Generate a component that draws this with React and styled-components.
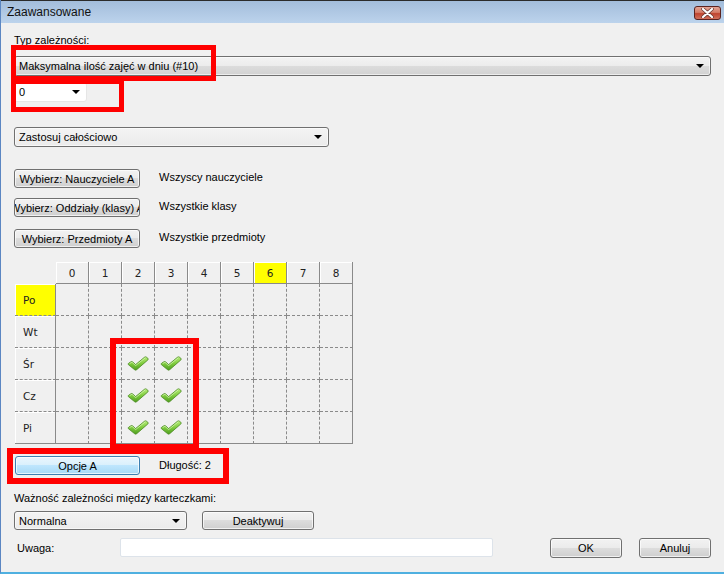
import React from "react";
import styled, { createGlobalStyle, css } from "styled-components";

const Global = createGlobalStyle`
  html, body { margin: 0; padding: 0; background: #f0f0f0; }
  body { font-family: "Liberation Sans", Arial, sans-serif; font-size: 11px; color: #000; }
  * { box-sizing: border-box; }
`;

const Window = styled.div`
  position: relative;
  width: 724px;
  height: 574px;
  background: #f0f0f0;
  border-left: 1px solid #5b86c2;
  border-bottom: 2px solid #4fb0e0;
  display: flex;
  flex-direction: column;
  overflow: hidden;
`;

const TitleBar = styled.div`
  height: 23px;
  flex: none;
  display: flex;
  align-items: center;
  justify-content: space-between;
  padding: 0 3px 0 6px;
  background: linear-gradient(#a3bddb, #bcd3ec);
  border-top: 1px solid #2b2b2b;
  font-size: 12px;
  color: #111;
`;

const CloseBtn = styled.div`
  width: 27px;
  height: 14px;
  margin-top: 2px;
  border: 1px solid #5a2320;
  border-radius: 3px;
  background: linear-gradient(#e4a595 0%, #d47c68 45%, #c0442f 55%, #d0705c 100%);
  display: flex;
  align-items: center;
  justify-content: center;
`;

const Body = styled.div`
  flex: 1;
  display: flex;
  flex-direction: column;
  padding: 0 13px 0 13px;
`;

const Label = styled.div`
  line-height: 13px;
  margin-top: ${(p) => p.$mt || 0}px;
  padding-left: ${(p) => p.$pl || 0}px;
  white-space: nowrap;
`;

const comboBase = css`
  position: relative;
  height: ${(p) => p.$h || 20}px;
  width: ${(p) => (p.$w ? p.$w + "px" : "auto")};
  margin-top: ${(p) => p.$mt || 0}px;
  display: flex;
  align-items: center;
  padding-left: 4px;
  flex: none;
  white-space: nowrap;
`;

const Combo = styled.div`
  ${comboBase};
  border: 1px solid ${(p) => (p.$variant === "white" ? "#e6e6e6" : "#707070")};
  border-radius: 3px;
  background: ${(p) =>
    p.$variant === "white"
      ? "#fff"
      : p.$variant === "flat"
      ? "linear-gradient(#f4f4f4, #ebebeb)"
      : "linear-gradient(#f3f3f3 0%, #ececec 49%, #dcdcdc 50%, #d2d2d2 100%)"};
  box-shadow: inset 0 0 0 1px ${(p) => (p.$variant === "white" ? "transparent" : "rgba(255,255,255,0.6)")};
`;

const Arrow = styled.span`
  position: absolute;
  right: ${(p) => p.$r || 5}px;
  top: 50%;
  margin-top: -2px;
  width: 0;
  height: 0;
  border-left: 4px solid transparent;
  border-right: 4px solid transparent;
  border-top: 4px solid #000;
`;

const Row = styled.div`
  display: flex;
  align-items: ${(p) => p.$align || "flex-start"};
  margin-top: ${(p) => p.$mt || 0}px;
`;

const Button = styled.div`
  height: ${(p) => p.$h || 19}px;
  width: ${(p) => p.$w}px;
  margin-left: ${(p) => p.$ml || 0}px;
  flex: none;
  display: flex;
  align-items: center;
  justify-content: center;
  overflow: hidden;
  white-space: nowrap;
  border-radius: 3px;
  border: 1px solid ${(p) => (p.$active ? "#3c7fb1" : "#707070")};
  background: ${(p) =>
    p.$active
      ? "linear-gradient(#eaf6fd 0%, #d9f0fc 49%, #bee6fd 50%, #a7d9f5 100%)"
      : "linear-gradient(#f2f2f2 0%, #ebebeb 49%, #dddddd 50%, #cfcfcf 100%)"};
  box-shadow: inset 0 0 0 1px rgba(255, 255, 255, 0.7);
  color: #000;
`;

const SideText = styled.div`
  margin-left: ${(p) => p.$ml || 19}px;
  padding-top: ${(p) => p.$pt || 0}px;
  line-height: 13px;
  white-space: nowrap;
`;

const Grid = styled.div`
  margin-top: 14px;
  display: grid;
  grid-template-columns: 41px repeat(9, 33px);
  grid-template-rows: 22px repeat(5, 32px);
  width: 338px;
  margin-left: 1px;
`;

const Corner = styled.div``;

const HeadCell = styled.div`
  display: flex;
  align-items: center;
  justify-content: center;
  background: ${(p) => (p.$hl ? "#ffff00" : "#f0f0f0")};
  border-right: 1px solid #8a8a8a;
  border-bottom: 1px solid #8a8a8a;
  box-shadow: inset 1px 1px 0 #fff;
  font-family: "DejaVu Sans", "Liberation Sans", sans-serif;
  font-size: 10.5px;
  color: #222;
`;

const RowHead = styled.div`
  display: flex;
  align-items: center;
  padding-left: 8px;
  background: ${(p) => (p.$hl ? "#ffff00" : "#f0f0f0")};
  border-right: 1px solid #8a8a8a;
  border-bottom: 1px ${(p) => (p.$last ? "solid" : "dashed")} #8a8a8a;
  box-shadow: inset 1px 1px 0 #fff;
  font-family: "DejaVu Sans", "Liberation Sans", sans-serif;
  font-size: 10.5px;
  color: #222;
`;

const Cell = styled.div`
  display: flex;
  align-items: center;
  justify-content: center;
  border-right: 1px ${(p) => (p.$lastCol ? "solid" : "dashed")} #8a8a8a;
  border-bottom: 1px ${(p) => (p.$lastRow ? "solid" : "dashed")} #8a8a8a;
`;

const Input = styled.div`
  width: 373px;
  height: 19px;
  margin-left: ${(p) => p.$ml}px;
  background: #fff;
  border: 1px solid #dde3ea;
  border-radius: 2px;
  flex: none;
`;

const Spacer = styled.div`
  flex: 1;
`;

const Highlight = styled.div`
  position: absolute;
  border: ${(p) => p.$b || 5}px solid #ff0000;
  pointer-events: none;
`;

const Check = () => (
  <svg width="22" height="15" viewBox="0 0 22 15">
    <defs>
      <linearGradient id="cg" x1="0" y1="0" x2="0" y2="1">
        <stop offset="0" stopColor="#b6ec78" />
        <stop offset="0.5" stopColor="#7fcc3e" />
        <stop offset="1" stopColor="#4f9e1f" />
      </linearGradient>
    </defs>
    <path
      d="M1.3 8.6 Q0.8 7.7 1.8 7.1 L3.9 5.8 Q4.9 5.2 5.8 6 L8.6 8.6 L17.4 1.3 Q18.3 0.5 19.3 1.1 L20.8 2.2 Q21.7 3 20.9 3.9 L9.7 13.7 Q8.6 14.6 7.6 13.7 Z"
      fill="url(#cg)"
      stroke="#4c8a26"
      strokeWidth="0.8"
    />
    <path d="M3 7.3 L5 6.3 L8.6 9.6 L18.2 1.9" fill="none" stroke="#d8f7b8" strokeWidth="0.9" strokeLinecap="round" opacity="0.8" />
  </svg>
);

const cols = ["0", "1", "2", "3", "4", "5", "6", "7", "8"];
const rows = ["Po", "Wt", "Śr", "Cz", "Pi"];
const checked = (r, c) => r >= 2 && (c === 2 || c === 3);

export default function App() {
  return (
    <>
      <Global />
      <Window>
        <TitleBar>
          <span>Zaawansowane</span>
          <CloseBtn>
            <svg width="13" height="10" viewBox="0 0 13 10">
              <path d="M2 1 L11 9 M11 1 L2 9" stroke="#6b3a34" strokeWidth="3.6" strokeLinecap="round" />
              <path d="M2 1 L11 9 M11 1 L2 9" stroke="#fff" strokeWidth="2.2" strokeLinecap="round" />
            </svg>
          </CloseBtn>
        </TitleBar>
        <Body>
          <Label $mt={11}>Typ zależności:</Label>
          <Combo $mt={9}>
            Maksymalna ilość zajęć w dniu (#10)
            <Arrow $r={6} />
          </Combo>
          <Combo $mt={6} $w={73} $variant="white">
            0
            <Arrow $r={6} />
          </Combo>
          <Combo $mt={25} $w={315} $variant="flat">
            Zastosuj całościowo
            <Arrow $r={6} />
          </Combo>
          <Row $mt={22}>
            <Button $w={126}>Wybierz: Nauczyciele A</Button>
            <SideText $pt={2}>Wszyscy nauczyciele</SideText>
          </Row>
          <Row $mt={10}>
            <Button $w={126}>Wybierz: Oddziały (klasy) A</Button>
            <SideText $pt={2}>Wszystkie klasy</SideText>
          </Row>
          <Row $mt={12}>
            <Button $w={126}>Wybierz: Przedmioty A</Button>
            <SideText $pt={2}>Wszystkie przedmioty</SideText>
          </Row>
          <Grid>
            <Corner />
            {cols.map((c) => (
              <HeadCell key={c} $hl={c === "6"}>
                {c}
              </HeadCell>
            ))}
            {rows.map((r, ri) => (
              <React.Fragment key={r}>
                <RowHead $hl={ri === 0} $last={ri === rows.length - 1}>
                  {r}
                </RowHead>
                {cols.map((c, ci) => (
                  <Cell key={c} $lastCol={ci === cols.length - 1} $lastRow={ri === rows.length - 1}>
                    {checked(ri, ci) && <Check />}
                  </Cell>
                ))}
              </React.Fragment>
            ))}
          </Grid>
          <Row $mt={12} $align="center">
            <Button $w={125} $ml={1} $active>
              Opcje A
            </Button>
            <SideText $ml={19}>Długość: 2</SideText>
          </Row>
          <Label $mt={17}>Ważność zależności między karteczkami:</Label>
          <Row $mt={6}>
            <Combo $w={173} $h={19} $variant="flat">
              Normalna
              <Arrow $r={6} />
            </Combo>
            <Button $w={112} $ml={15}>
              Deaktywuj
            </Button>
          </Row>
          <Row $mt={8} $align="flex-start">
            <SideText $ml={3} $pt={4}>Uwaga:</SideText>
            <Input $ml={66} />
            <Spacer />
            <Button $w={72} $h={20}>OK</Button>
            <Button $w={72} $h={20} $ml={17}>Anuluj</Button>
          </Row>
        </Body>
        <Highlight style={{ left: 10, top: 45, width: 205, height: 36 }} />
        <Highlight style={{ left: 10, top: 79, width: 113, height: 33 }} />
        <Highlight $b={6} style={{ left: 109, top: 338, width: 89, height: 112 }} />
        <Highlight $b={6} style={{ left: 6, top: 448, width: 222, height: 36 }} />
      </Window>
    </>
  );
}
